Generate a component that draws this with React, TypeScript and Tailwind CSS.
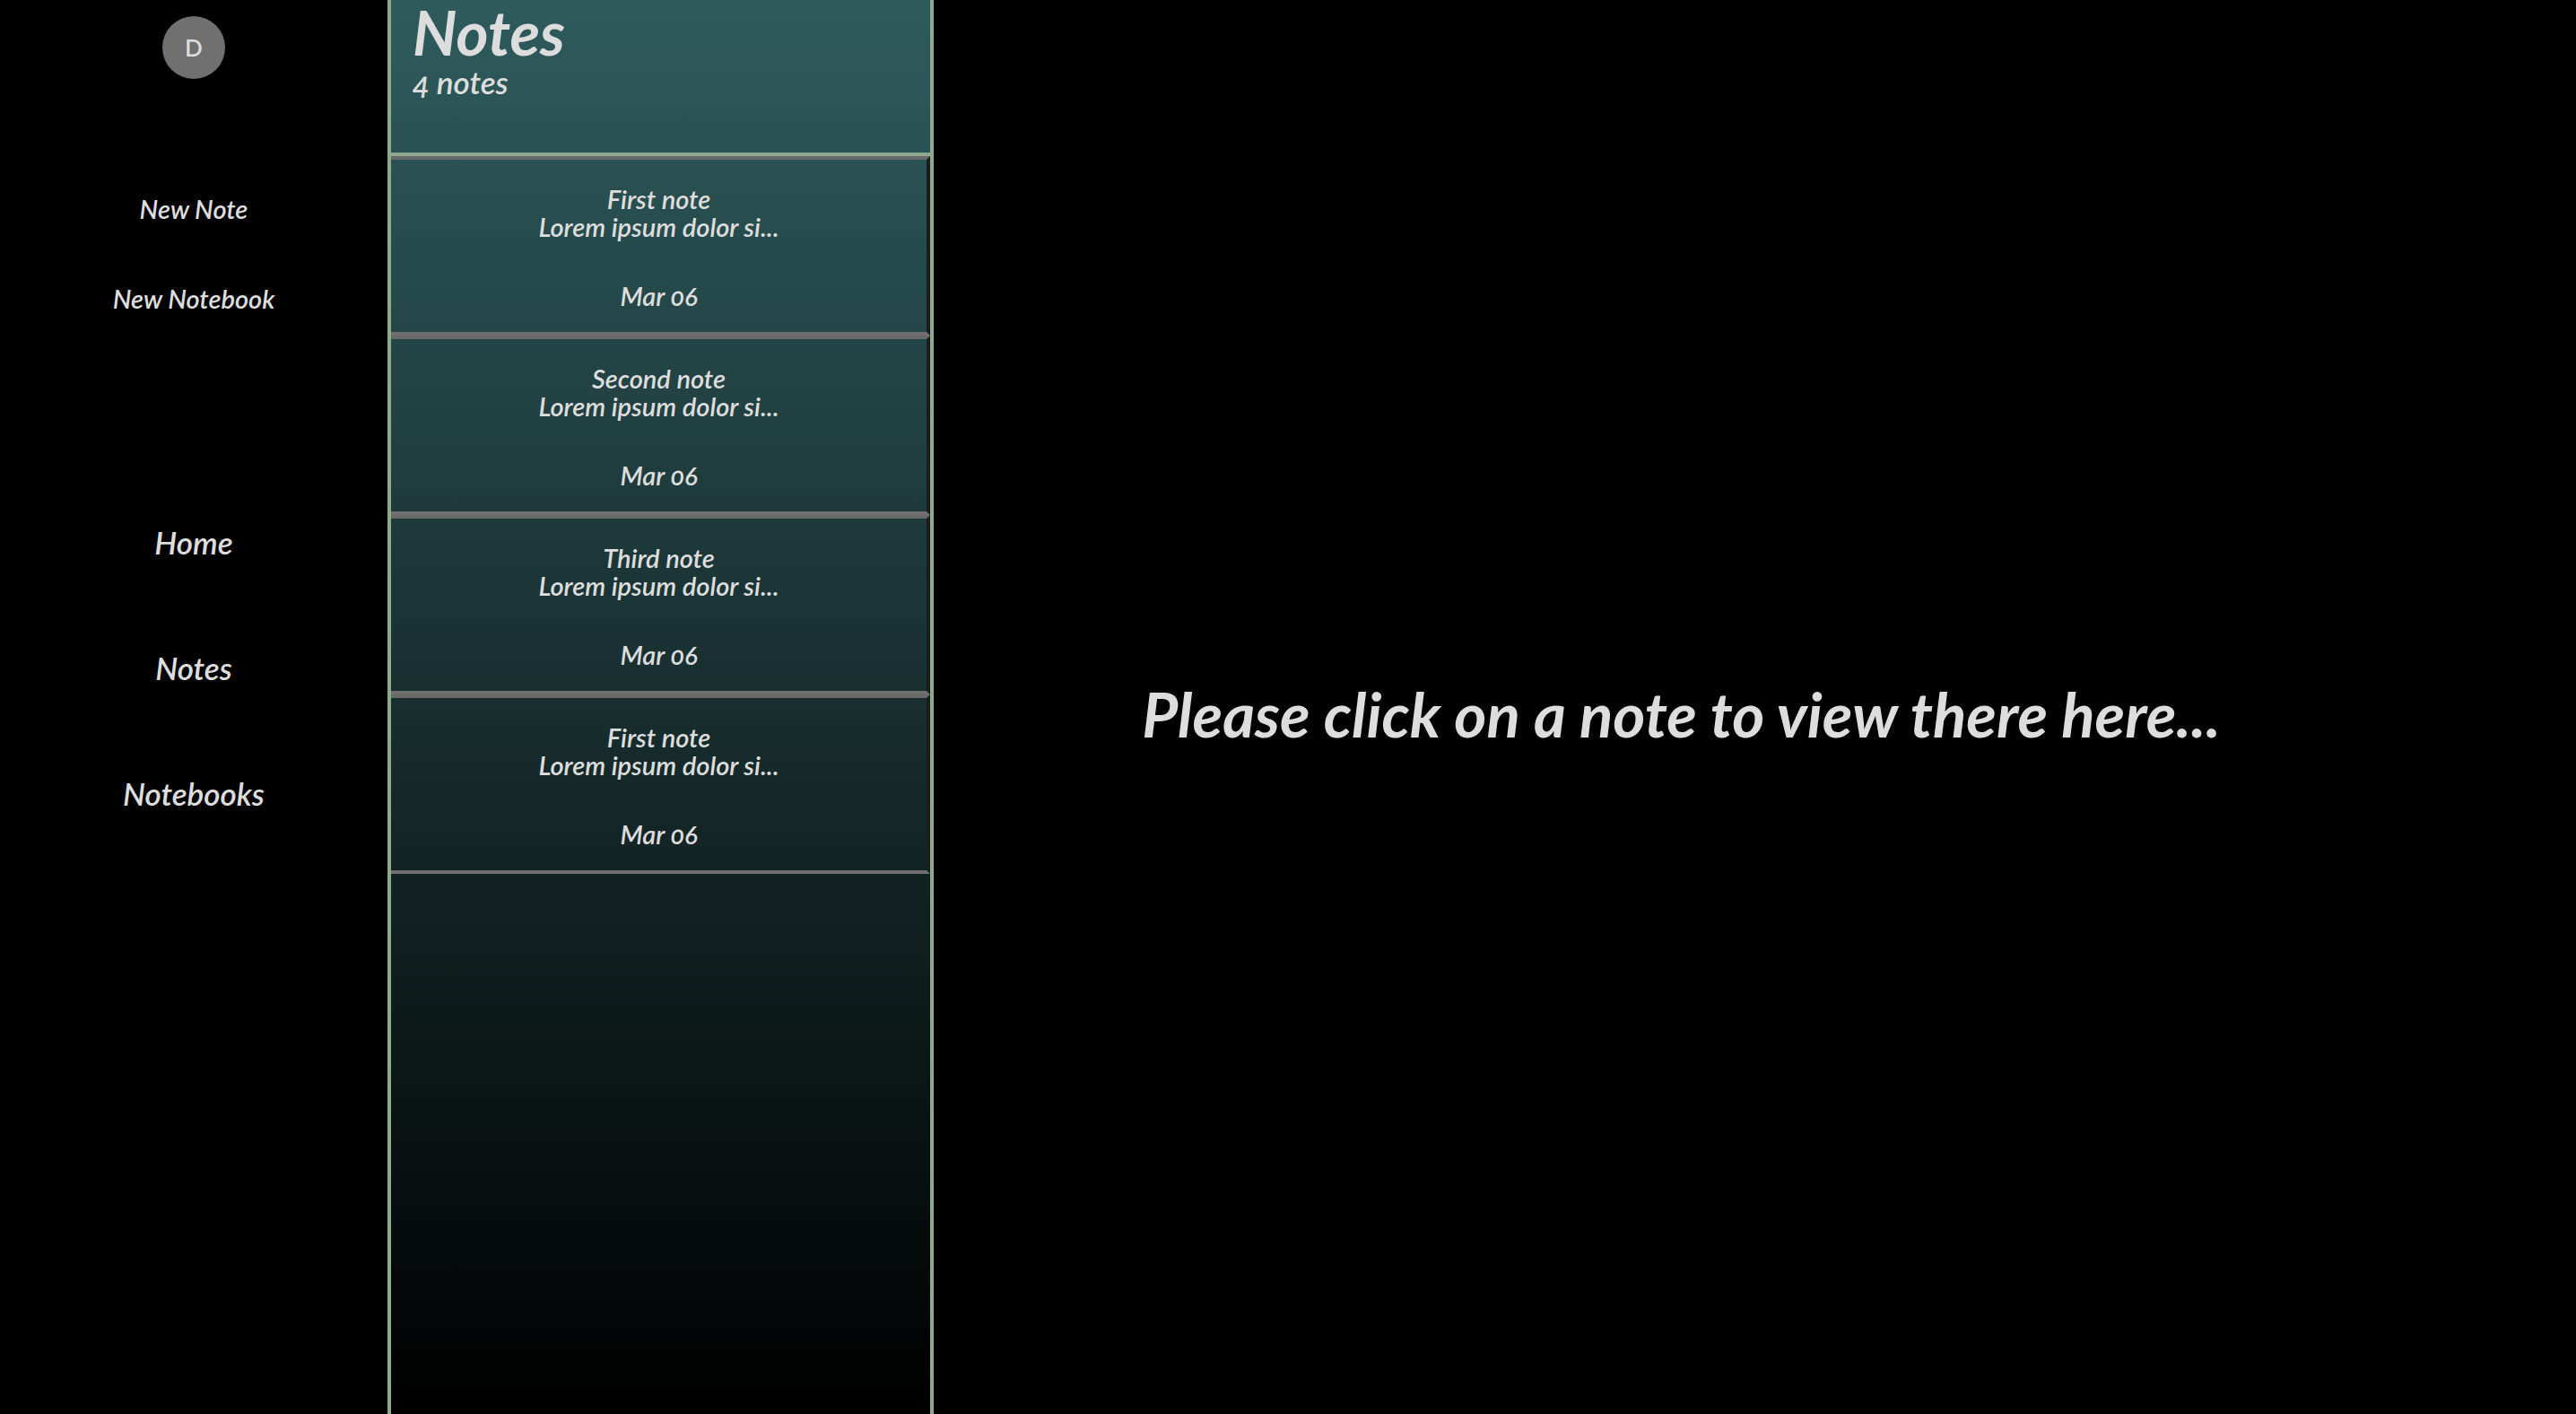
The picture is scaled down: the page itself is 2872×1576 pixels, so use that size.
const notes = [
  { title: "First note", body: "Lorem ipsum dolor si...", date: "Mar 06" },
  { title: "Second note", body: "Lorem ipsum dolor si...", date: "Mar 06" },
  { title: "Third note", body: "Lorem ipsum dolor si...", date: "Mar 06" },
  { title: "First note", body: "Lorem ipsum dolor si...", date: "Mar 06" },
];

const links = ["Home", "Notes", "Notebooks"];
const actions = ["New Note", "New Notebook"];

export default function App() {
  return (
    <div className="grid min-h-screen grid-cols-[432px_609px_1fr] bg-black font-['Lato','Open_Sans',sans-serif] font-semibold italic oldstyle-nums text-[#dddddd]">
      <aside className="flex flex-col items-center pt-[18px]">
        <button className="flex size-[70px] items-center justify-center rounded-full bg-[#707070] text-[26px] leading-8 not-italic">
          D
        </button>
        <div className="mt-[120px] flex flex-col items-center gap-[50px]">
          {actions.map((label) => (
            <button key={label} className="h-[50px] text-[29px] leading-8">
              {label}
            </button>
          ))}
        </div>
        <nav className="mt-[226px] flex flex-col items-center gap-[100px]">
          {links.map((label) => (
            <a key={label} href="#" className="text-[35px] leading-10">
              {label}
            </a>
          ))}
        </nav>
      </aside>

      <section className="border-x-4 border-[#8fa98f] bg-linear-to-b/srgb from-[#2f5b5d] to-black">
        <header className="h-[174px] border-b-4 border-[#8fa98f] px-6">
          <h1 className="text-[69px] leading-[71px] font-bold">Notes</h1>
          <p className="text-[35px] leading-10">4 notes</p>
        </header>
        <ul>
          {notes.map((note, i) => (
            <li key={i}>
              <button className="flex h-[200px] w-full flex-col items-center border-y-4 border-r-4 border-t-[#696969] border-r-[#1c1c1c] border-b-[#707070] pt-7 text-[29px] leading-[31px]">
                <span>{note.title}</span>
                <span>{note.body}</span>
                <span className="mt-[46px]">{note.date}</span>
              </button>
            </li>
          ))}
        </ul>
      </section>

      <main className="flex items-center justify-center pt-4 pr-[164px]">
        <h2 className="text-[69px] leading-20 font-bold">
          Please click on a note to view there here...
        </h2>
      </main>
    </div>
  );
}
